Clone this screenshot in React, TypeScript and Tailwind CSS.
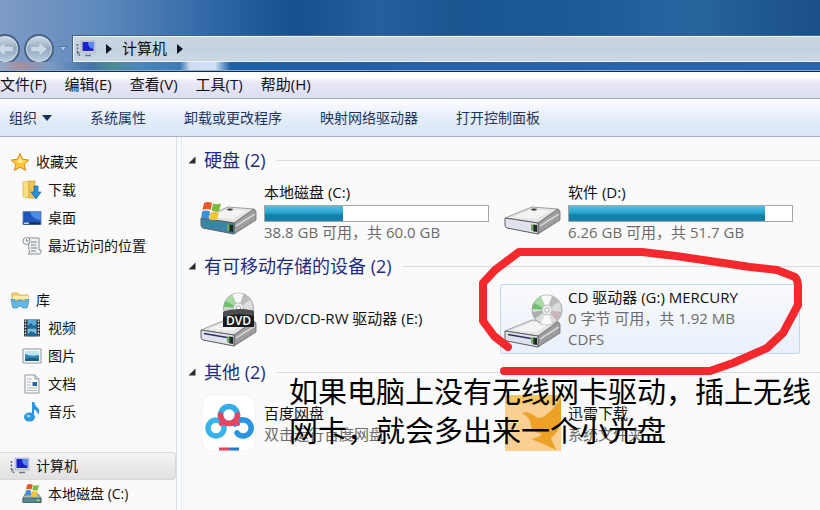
import type { ReactNode } from "react";

function Disc({ cx, cy, r }: { cx: number; cy: number; r: number }) {
  return (
    <g transform={`translate(${cx} ${cy}) scale(${r / 15})`}>
      <circle r="15" fill="#dcdedd" stroke="#8f9391" strokeWidth="0.8" />
      <path d="M0 0 -14 -5A15 15 0 0 1 -6 -13.5Z" fill="#a9d8a6" />
      <path d="M0 0 -14.8 -1A15 15 0 0 1 -13 -7Z" fill="#6fbf6c" />
      <path d="M0 0 -6 -13.5A15 15 0 0 1 5 -14Z" fill="#f7f8f7" />
      <path d="M0 0 5 -14A15 15 0 0 1 12 -8.5Z" fill="#b9bcbb" />
      <path d="M0 0 14.6 2A15 15 0 0 1 10 11Z" fill="#c9b6bd" />
      <path d="M0 0 5 13.8A15 15 0 0 1 -6 13.5Z" fill="#fafafa" />
      <path d="M0 0 -12 8.5A15 15 0 0 1 -14.6 2Z" fill="#a9aeab" />
      <circle r="5" fill="#eceeed" stroke="#b4b7b6" strokeWidth="0.8" />
      <circle r="2.2" fill="#fff" stroke="#9a9e9c" strokeWidth="0.8" />
    </g>
  );
}

function DriveBody({ y, front = "#dfe2ec", slot = false }: { y: number; front?: string; slot?: boolean }) {
  return (
    <g transform={`translate(0 ${y})`} strokeLinejoin="round">
      <path d="M1 12 28 1 54 3 34 17Z" fill="#e4e4e5" stroke="#8a8a8c" strokeWidth="0.8" />
      <path d="M9 11 29 3 47 4.500 32 13Z" fill="#f3f3f3" />
      <path d="M34 17 54 3Q56 4 56 6V14L34 28Z" fill="#9d9da0" stroke="#6b6b6e" strokeWidth="0.8" />
      <path d="M36 20 55 8" stroke="#d3d3d5" strokeWidth="1.600" />
      <path d="M1 12 34 17V28L3 22Q1 21 1 19Z" fill={front} stroke="#5c5c60" />
      {slot && <path d="M4 15.500 27 19.500" stroke="#2c3060" strokeWidth="1.500" />}
      <path d="M29 18.500 33 19V26L29 25.300Z" fill="#1d2a20" />
      <path d="M27 18.500h2.500v6H27z" fill="#71a862" />
      {!slot && <ellipse cx="30" cy="3.600" rx="3" ry="1.100" fill="#3c3c3e" />}
    </g>
  );
}

function Flag({ transform }: { transform?: string }) {
  return (
    <g transform={transform}>
      <path d="M3 1Q7-1 11 1L9.500 8Q6 6 1.500 8Z" fill="#e4582c" />
      <path d="M12 1.500Q16 3 20 1.500L18 9Q14 10 10.500 8.500Z" fill="#7cbb3c" />
      <path d="M1.200 9.500Q5 7.500 9 9.500L7.500 17Q4 15 0 17Z" fill="#3f8fd8" />
      <path d="M10 10Q14 11.500 18 10L16 17.500Q12 19 8.500 17.500Z" fill="#f6c430" />
    </g>
  );
}

const tileSvg = "size-14 shrink-0 overflow-visible";

const SystemDrive = () => (
  <svg viewBox="0 0 56 56" className={tileSvg} aria-hidden="true">
    <DriveBody y={21} front="#3a86a8" />
    <Flag transform="translate(1 17)" />
  </svg>
);
const PlainDrive = () => (
  <svg viewBox="0 0 56 56" className={tileSvg} aria-hidden="true">
    <DriveBody y={21} />
  </svg>
);
const DvdDrive = () => (
  <svg viewBox="0 0 56 56" className={tileSvg} aria-hidden="true">
    <DriveBody y={27} slot />
    <Disc cx={38.5} cy={17} r={15} />
    <path d="M23 21Q38 16 54 20V36H23Z" fill="#1a1b1c" />
    <path d="M23 21Q38 16 54 20V25Q38 21 23 26Z" fill="#4b4d4e" />
    <text x="38.500" y="34" textAnchor="middle" fontSize="12" fontWeight="600" fill="#fff" fontFamily="Open Sans, sans-serif">DVD</text>
  </svg>
);
const CdDrive = () => (
  <svg viewBox="0 0 56 56" className={tileSvg} aria-hidden="true">
    <DriveBody y={28} slot />
    <Disc cx={43} cy={19} r={15} />
  </svg>
);
const NetDisk = () => (
  <svg viewBox="0 0 56 56" className={tileSvg} aria-hidden="true">
    <rect x="2" y="-2" width="53" height="56" rx="9" fill="#fff" stroke="#f1f1f3" />
    <g fill="none" strokeWidth="5.500" strokeLinecap="round">
      <circle cx="16" cy="31" r="8" stroke="#38b4ea" />
      <path d="M35 27Q39 22 44 23A8 8 0 1 1 37 36" stroke="#2c93e0" />
      <circle cx="29" cy="18" r="8.500" stroke="#35aee6" />
      <path d="M20.500 18A8.500 8.500 0 0 0 37.500 18" stroke="#e64560" />
      <path d="M23 24 21 27M35 24 38 27" stroke="#e64560" strokeWidth="4" />
    </g>
    <path d="M19 52h10" stroke="#e8435a" strokeWidth="3" />
    <path d="M29 52h10" stroke="#2377cf" strokeWidth="3" />
  </svg>
);
const Thunder = () => (
  <svg viewBox="0 0 56 56" className={tileSvg} aria-hidden="true">
    <path d="M1-2h56v56H1z" fill="#f9cf92" />
    <path d="M1-2h56v9H1z" fill="#f3c65f" />
    <path d="M18 16Q25 14 29 18 33 22 39 20 50 13 57 1V24Q55 35 47 41L52 53Q38 46 27 42 36 40 38 37 28 35 27 29 27 21 18 16Z" fill="#eda126" />
  </svg>
);

function Small({ children }: { children: ReactNode }) {
  return (
    <svg viewBox="0 0 20 20" className="size-5 shrink-0" aria-hidden="true">
      {children}
    </svg>
  );
}

const ComputerIcon = () => (
  <Small>
    <path d="M1.500 5v11M1.500 14h2v3" stroke="#5d626c" strokeWidth="1.500" strokeDasharray="2 1.500" fill="none" />
    <path d="M5 2h14v12H5z" fill="#cfd6e4" stroke="#9ba6b8" strokeWidth="0.600" />
    <path d="M6.500 3h11v9h-11z" fill="#1a1fd0" />
    <path d="M12 3h5.500v7Q12 9 12 3z" fill="#5a86f0" />
    <path d="M9 16.500h6" stroke="#6f7683" strokeWidth="1.500" />
  </Small>
);
const StarIcon = () => (
  <Small>
    <path d="M10 1.500 12.600 7.300 19 8 14.200 12.200 15.600 18.500 10 15.200 4.400 18.500 5.800 12.200 1 8 7.400 7.300Z" fill="#fbc53a" stroke="#dd8a1c" strokeLinejoin="round" />
    <path d="M10 4 11.500 8.500 16 9 10 11 6 9 8.500 8.500Z" fill="#ffec9a" />
  </Small>
);
const DownloadIcon = () => (
  <Small>
    <path d="M1 2 7 1V18L1 16.500Z" fill="#f8df82" stroke="#d5ac3d" strokeWidth="0.700" />
    <path d="M7 1h6v17H7z" fill="#efc656" stroke="#cf9f33" strokeWidth="0.700" />
    <path d="M12 6h4v6h3l-5 7-5-7h3z" fill="#2791da" stroke="#1267ad" strokeWidth="0.700" />
  </Small>
);
const DesktopIcon = () => (
  <Small>
    <path d="M1 3.500h18v13H1z" fill="#1d55bb" stroke="#6f89ae" />
    <path d="M8 4h10.500v8Q11 12 8 4z" fill="#4d8ce6" />
    <path d="M1.500 14.500h17v2h-17z" fill="#1c2b4e" />
    <path d="M2 14.500h5v1.500H2z" fill="#b7d6f5" />
  </Small>
);
const RecentIcon = () => (
  <Small>
    <path d="M6 2h11v12h2v3q0 1-2 1H6q3-1 1-4z" fill="#eef0f1" stroke="#8a9298" />
    <path d="M9 6h6M9 9h5M9 12h6M9 15h5" stroke="#7b8388" strokeWidth="1.200" />
    <circle cx="4.500" cy="5" r="3.500" fill="#f4f6f7" stroke="#8a9298" />
    <path d="M4.500 3v2h2" stroke="#4f6472" fill="none" strokeWidth="0.800" />
  </Small>
);
const LibraryIcon = () => (
  <Small>
    <path d="M2 3h6l1 2h9v11H2z" fill="#f4d272" stroke="#d5a944" strokeWidth="0.800" />
    <path d="M3 6h15v3H3z" fill="#fbeaa8" />
    <path d="M1 9.500h4V12q5-4 10 0V9.500h4L17 18h-4.500q-2.500-4-5 0H3z" fill="#63b9e6" stroke="#3a8fc2" strokeWidth="0.700" />
  </Small>
);
const VideoIcon = () => (
  <Small>
    <path d="M2 1.500h16v17H2z" fill="#29343d" />
    <path d="M5.500 2h9v7.500h-9z" fill="#5aa9da" />
    <path d="M5.500 10.500h9V18h-9z" fill="#70bde4" />
    <path d="M5.500 8 9 5l3 3 2.500-2v3.500h-9zM5.500 16l4-3 5 3v2h-9z" fill="#1f6795" />
    <path d="M3.500 2.500v16M16.500 2.500v16" stroke="#eef2f4" strokeWidth="1.500" strokeDasharray="1.500 1.500" />
  </Small>
);
const PictureIcon = () => (
  <Small>
    <path d="M1 3h18v14H1z" fill="#fff" stroke="#8795a0" />
    <path d="M3 5h14v10H3z" fill="#bfe4f5" />
    <path d="M3 8q6 3 14 1v6H3z" fill="#2f86b4" />
    <path d="M3 13q6-2 14 0v2H3z" fill="#1c5d87" />
  </Small>
);
const DocIcon = () => (
  <Small>
    <path d="M3 1h10l4 4v14H3z" fill="#fdfdfe" stroke="#8d959d" />
    <path d="M13 1v4h4" fill="#dfe5ec" stroke="#8d959d" />
    <path d="M5 5h5M5 8h4M5 11h4M5 14h10M5 16.500h10" stroke="#a9b1b9" />
    <path d="M10.500 8h4.500v4h-4.500z" fill="#2c62a8" />
  </Small>
);
const MusicIcon = () => (
  <Small>
    <path d="M10 0h2q1 4 4 6 2.500 3 0 7-.5-4.500-4-5.500V15H10z" fill="#2b94da" />
    <ellipse cx="7.500" cy="15" rx="5.500" ry="4.500" fill="#2b94da" />
    <ellipse cx="6.500" cy="14" rx="2.200" ry="1.500" fill="#8fd0f5" />
  </Small>
);
const SmallDriveIcon = () => (
  <Small>
    <path d="M3 10h13l3 4v4.500H1V14z" fill="#a9b8bb" stroke="#5e6c70" strokeWidth="0.800" />
    <path d="M1 14h18v4.500H1z" fill="#4f8b91" stroke="#4b5a5e" strokeWidth="0.800" />
    <path d="M15 15.500h2.500v1.500H15z" fill="#9be06a" />
    <Flag transform="translate(3 0) scale(.7)" />
  </Small>
);

const menus = ["文件(F)", "编辑(E)", "查看(V)", "工具(T)", "帮助(H)"];
const commands = ["系统属性", "卸载或更改程序", "映射网络驱动器", "打开控制面板"];

type Entry = { label: string; icon: ReactNode; current?: boolean };
const places: Entry[][] = [
  [
    { label: "收藏夹", icon: <StarIcon /> },
    { label: "下载", icon: <DownloadIcon /> },
    { label: "桌面", icon: <DesktopIcon /> },
    { label: "最近访问的位置", icon: <RecentIcon /> },
  ],
  [
    { label: "库", icon: <LibraryIcon /> },
    { label: "视频", icon: <VideoIcon /> },
    { label: "图片", icon: <PictureIcon /> },
    { label: "文档", icon: <DocIcon /> },
    { label: "音乐", icon: <MusicIcon /> },
  ],
  [
    { label: "计算机", icon: <ComputerIcon />, current: true },
    { label: "本地磁盘 (C:)", icon: <SmallDriveIcon /> },
  ],
];

type Item = { name: string; icon: ReactNode; used?: number; lines?: string[]; selected?: boolean };
const groups: { title: string; items: Item[] }[] = [
  {
    title: "硬盘 (2)",
    items: [
      { name: "本地磁盘 (C:)", icon: <SystemDrive />, used: 35, lines: ["38.8 GB 可用，共 60.0 GB"] },
      { name: "软件 (D:)", icon: <PlainDrive />, used: 88, lines: ["6.26 GB 可用，共 51.7 GB"] },
    ],
  },
  {
    title: "有可移动存储的设备 (2)",
    items: [
      { name: "DVD/CD-RW 驱动器 (E:)", icon: <DvdDrive /> },
      { name: "CD 驱动器 (G:) MERCURY", icon: <CdDrive />, lines: ["0 字节 可用，共 1.92 MB", "CDFS"], selected: true },
    ],
  },
  {
    title: "其他 (2)",
    items: [
      { name: "百度网盘", icon: <NetDisk />, lines: ["双击运行百度网盘"] },
      { name: "迅雷下载", icon: <Thunder />, lines: ["系统文件夹"] },
    ],
  },
];

function Arrow({ back = false }: { back?: boolean }) {
  return (
    <button
      type="button"
      aria-label={back ? "后退" : "前进"}
      className="flex size-[30px] shrink-0 items-center justify-center rounded-full border-2 border-[#4b6384] bg-linear-to-b from-[#d3dde8] via-[#93a9c1] to-[#bdd0e2] shadow-[inset_0_0_0_1px_#d5e3f1]"
    >
      <svg viewBox="0 0 20 20" className={back ? "size-5" : "size-5 rotate-180"} aria-hidden="true">
        <path d="M2 10 10 3V7.500H18V12.500H10V17Z" fill="#cbd8e6" stroke="#a3b6cb" strokeWidth="0.800" />
      </svg>
    </button>
  );
}

function Caret() {
  return (
    <svg viewBox="0 0 6 10" className="h-2.5 w-1.5 shrink-0" aria-hidden="true">
      <path d="M0 0 6 5 0 10Z" fill="#10161e" />
    </svg>
  );
}

function Tile({ item }: { item: Item }) {
  return (
    <li
      className={
        item.selected
          ? "flex h-[70px] items-center gap-2 rounded-xs border border-[#c3d7ea] bg-linear-to-b from-[#fafafb] to-[#e8f0fb] px-[3px]"
          : "flex h-[70px] items-center gap-2 border border-transparent px-[3px]"
      }
    >
      {item.icon}
      <div className="min-w-0 grow pb-0.5 text-[15px] leading-[21px] whitespace-nowrap text-[#6b6b6b]">
        <div className="text-[#111]">{item.name}</div>
        {item.used !== undefined && (
          <div
            role="meter"
            aria-label={item.name}
            aria-valuenow={item.used}
            aria-valuemin={0}
            aria-valuemax={100}
            className="mt-0.5 h-[17px] w-[225px] border border-[#a5a5a5] bg-white"
          >
            <div
              className="h-full bg-linear-to-b from-[#4fc0e2] from-0% via-[#2ba6cf] via-45% to-[#1480aa] to-60%"
              style={{ width: `${item.used}%` }}
            />
          </div>
        )}
        {item.lines?.map((line) => <div key={line}>{line}</div>)}
      </div>
    </li>
  );
}

export default function App() {
  return (
    <div className="relative flex min-h-screen flex-col overflow-hidden bg-[#fafafa] font-['Open_Sans','Noto_Sans_CJK_SC',sans-serif] text-sm text-[#111]">
      <header className="flex h-[72px] flex-col justify-end border-b border-[#0f2d52] bg-[linear-gradient(90deg,#7f9bc5_0%,#5f8abd_12%,#2f67a5_26%,#17508c_36%,#25609c_46%,#1a5590_56%,#1b5b98_72%,#28659f_84%,#1a4f88_100%)]">
        <div className="flex h-[27px] items-center">
          <div className="-ml-2.5 flex shrink-0 items-center gap-1">
            <Arrow back />
            <Arrow />
          </div>
          <svg viewBox="0 0 8 6" className="mx-[5px] h-1.5 w-2 shrink-0" aria-hidden="true">
            <path d="M0 0.500H8L4 5.500Z" fill="#a8c3e2" stroke="#456b99" strokeWidth="0.800" />
          </svg>
          <nav
            aria-label="地址"
            className="flex h-7 grow items-center gap-2.5 border border-r-0 border-[#42638c] bg-linear-to-b from-[#cbd5df] via-[#c3d2e3] to-[#ccd8e2] pl-[3px] shadow-[inset_0_1px_0_#eaf4fa,inset_0_-1px_0_#eaf4fa,inset_1px_0_0_#eaf4fa]"
          >
            <ComputerIcon />
            <Caret />
            <a href="#computer" className="text-[15px]">计算机</a>
            <Caret />
          </nav>
        </div>
        <div className="flex h-[9px] items-end border-b border-[#8caed2]">
          <div className="h-2 w-full bg-[linear-gradient(90deg,#93a9c8_0,#a58f9c_20px,#7c9cc5_50px,#4274a9_90px,#4b8b92_112px,#4a87bb_140px,#3d79b6_180px,#cddcf3_190px,#cfe0f6_215px,#1f62a8_230px,#2260a5_300px,#2a66ad_100%)]" />
        </div>
      </header>

      <nav aria-label="菜单" className="flex h-[27px] items-center gap-[18px] border-b border-[#a4a8b8] bg-linear-to-b from-[#fdfcfd] from-20% via-[#e9e7f8] via-40% to-[#dbdff0] text-[15px] whitespace-nowrap">
        {menus.map((m) => (
          <button key={m} type="button">{m}</button>
        ))}
      </nav>

      <div role="toolbar" aria-label="命令" className="flex h-[38px] items-center gap-[38px] border-b border-[#a9b4c5] bg-linear-to-b from-[#fbfafe] from-10% via-[#e6effa] via-45% to-[#dae5f4] pl-[9px] whitespace-nowrap text-[#1e3560]">
        <button type="button" className="flex items-center gap-[5px]">
          组织
          <svg viewBox="0 0 10 6" className="h-1.5 w-2.5" aria-hidden="true">
            <path d="M0 0H10L5 6Z" fill="#1a3357" />
          </svg>
        </button>
        {commands.map((c) => (
          <button key={c} type="button">{c}</button>
        ))}
      </div>

      <div className="flex grow">
        <nav aria-label="导航窗格" className="flex w-[177px] shrink-0 flex-col gap-[26px] border-r border-[#d5dfec] pt-[11px] whitespace-nowrap">
          {places.map((group, g) => (
            <ul key={g}>
              {group.map((p, i) => (
                <li key={p.label}>
                  <a
                    href={`#${p.label}`}
                    className={
                      p.current
                        ? "flex h-7 items-center gap-1.5 rounded-r-sm border border-l-0 border-[#d9d9d9] bg-linear-to-b from-[#f5f5f5] to-[#e0e0e0] pl-2.5"
                        : i === 0
                          ? "flex h-7 items-center gap-1.5 pl-2.5"
                          : "flex h-7 items-center gap-1.5 pl-[22px]"
                    }
                  >
                    {p.icon}
                    {p.label}
                  </a>
                </li>
              ))}
            </ul>
          ))}
        </nav>

        <main className="ml-1 flex min-w-0 grow flex-col gap-1.5 border-l border-[#e3ebf4] pt-[11px] pl-3.5">
          {groups.map((group) => (
            <section key={group.title} className="flex flex-col gap-1.5">
              <h2 className="-ml-2 flex h-6 items-center text-lg leading-6 whitespace-nowrap text-[#1f2c86]">
                <svg viewBox="0 0 8 8" className="mr-2 size-2" aria-hidden="true">
                  <path d="M7.500 0.500V7.500H0.500Z" fill="#2b2b2b" />
                </svg>
                {group.title}
                <span className="ml-2.5 h-px grow bg-[#dcdcdf]" />
              </h2>
              <ul className="grid grid-cols-[repeat(auto-fill,300px)] gap-1">
                {group.items.map((item) => (
                  <Tile key={item.name} item={item} />
                ))}
              </ul>
            </section>
          ))}
        </main>
      </div>

      <svg viewBox="0 0 350 140" className="pointer-events-none absolute top-[240px] left-[470px] h-[140px] w-[350px]" aria-hidden="true">
        <path
          d="M38 107 24 96 13 81V43L25 30 49 12H172L206 16 240 21 280 27 307 30 325 37Q328 40 328 46V65L313 93 297 108 263 123 240 131H34"
          fill="none"
          stroke="#f5282d"
          strokeWidth="8"
          strokeLinecap="round"
          strokeLinejoin="round"
        />
      </svg>
      <p className="pointer-events-none absolute top-[372px] left-[289px] text-[29px] leading-[39px] whitespace-nowrap text-black">
        如果电脑上没有无线网卡驱动，插上无线
        <br />
        网卡，就会多出来一个小光盘
      </p>
    </div>
  );
}
